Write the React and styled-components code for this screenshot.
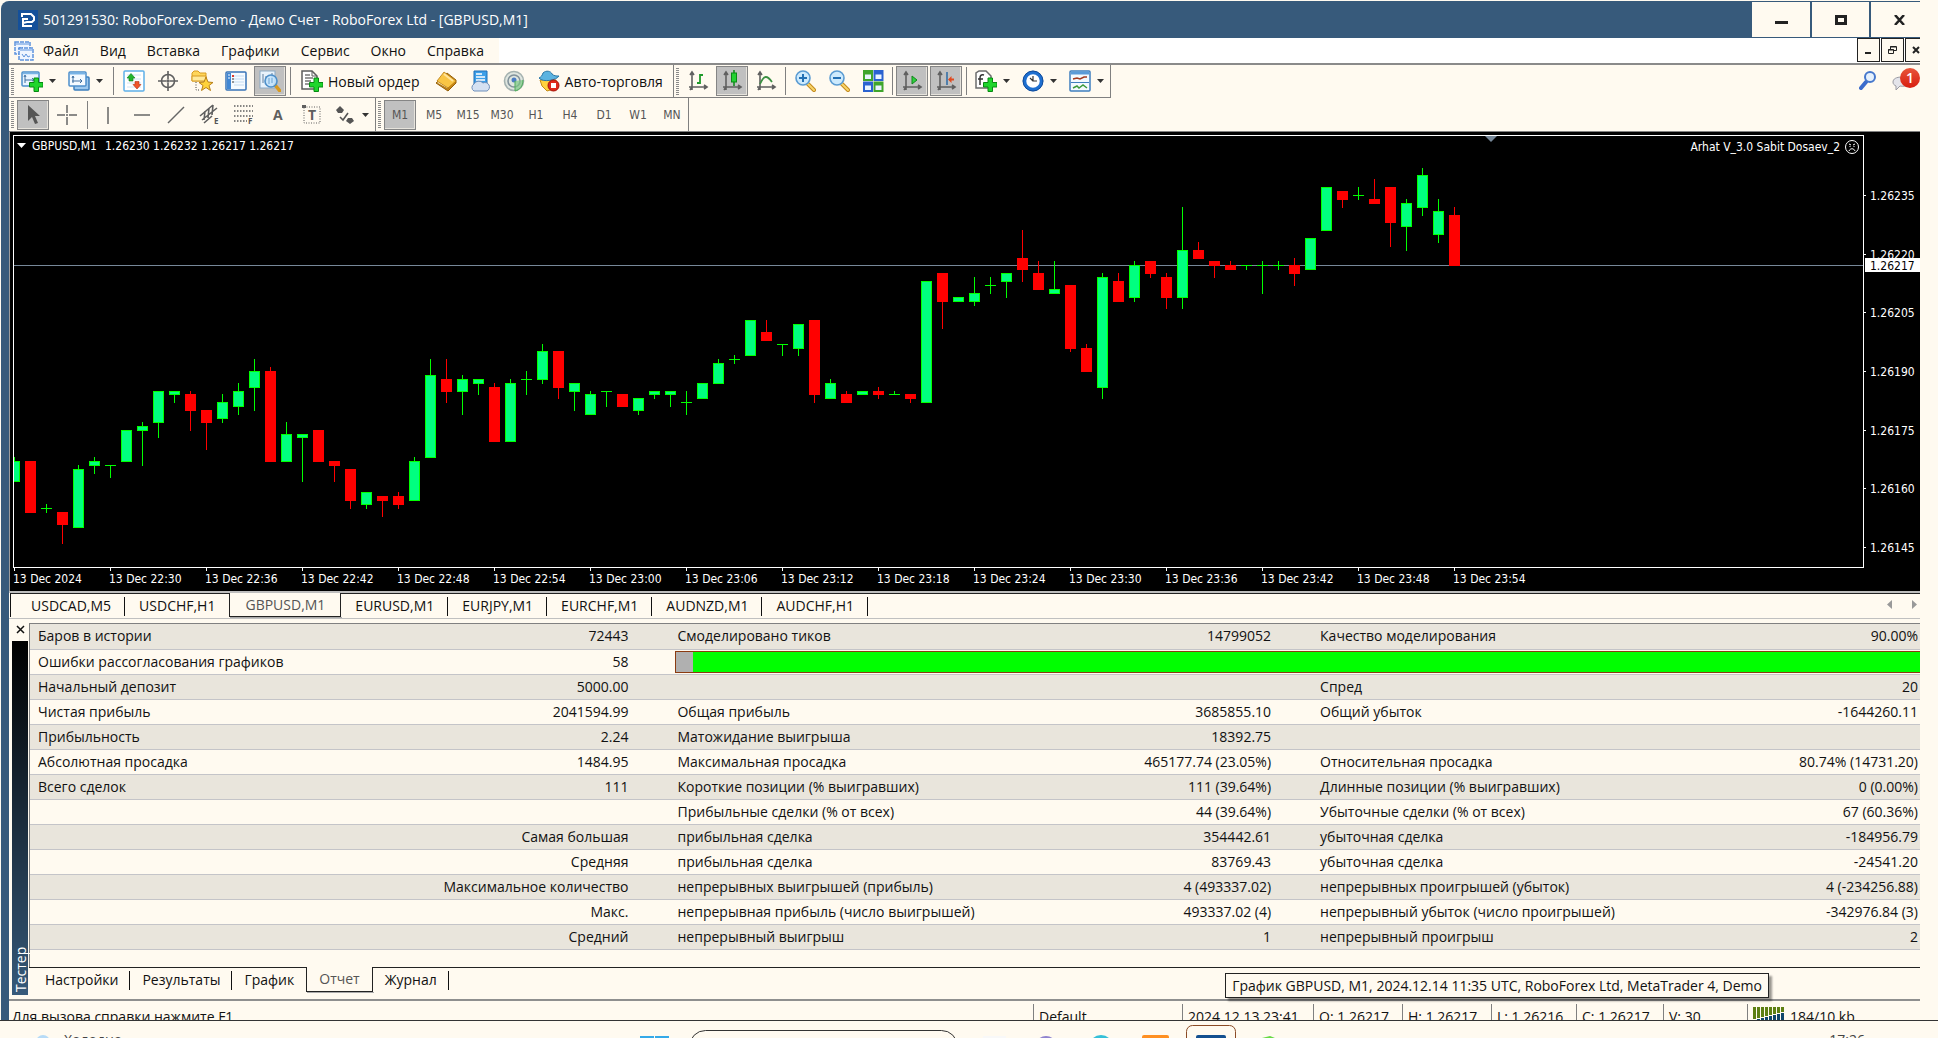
import React from 'react';
import styled, { createGlobalStyle } from 'styled-components'

const GlobalStyle = createGlobalStyle`
  * {
    box-sizing: border-box;
  }

  body {
    margin: 0;
    background: #fffaf0;
    color: #111111;
    font-family: "Open Sans", "Noto Sans", sans-serif;
    font-size: 14px;
  }

  button {
    margin: 0;
    padding: 0;
    border: 0;
    background: none;
    color: inherit;
    font: inherit;
    white-space: nowrap;
  }
`

const Desktop = styled.div`
  display: flex;
  flex-direction: column;
  height: 100vh;
  overflow: hidden;
`

const AppWindow = styled.div`
  display: flex;
  flex-direction: column;
  flex: 1;
  min-height: 0;
  margin: 1px 18px 0 1px;
  padding-left: 8px;
  background: #375a7b;
  border-top-left-radius: 8px;
`

const TitleBar = styled.header`
  display: flex;
  align-items: center;
  gap: 5px;
  height: 37px;
  padding-left: 9px;
  color: #ffffff;
`

const Title = styled.h1`
  flex: 1;
  margin: 0;
  font-size: 14px;
  font-weight: 400;
`

const WindowButtons = styled.div`
  display: flex;
  gap: 2px;
  height: 35px;
`

const WindowButton = styled.button`
  display: flex;
  align-items: center;
  justify-content: center;
  width: ${props => props.$width}px;
  padding-left: ${props => props.$cut ? 8 : 0}px;
  background: #fffaf0;
`

const MenuBar = styled.nav`
  display: flex;
  height: 25px;
  background: #ffffff;
`

const MenuItems = styled.div`
  display: flex;
  align-items: center;
  gap: 21px;
  width: 490px;
  padding-left: 5px;
  background: #fffaf0;

  svg {
    margin-right: -12px;
  }
`

const ChildButtons = styled.div`
  display: flex;
  gap: 1px;
  height: 24px;
  margin-left: auto;
`

const ChildButton = styled.button`
  display: flex;
  align-items: center;
  justify-content: center;
  width: ${props => props.$width}px;
  padding-left: ${props => props.$cut ? 6 : 0}px;
  border: 1px solid #222222;
  border-right-width: ${props => props.$cut ? 0 : 1}px;
  background: #fffaf0;
`

const Toolbars = styled.div`
  background: #fffaf0;
  border-top: 2px solid #8a8a8a;
  border-bottom: 1px solid #808080;
`

const ToolbarRow = styled.div`
  display: flex;
  height: 33px;
`

const Toolbar = styled.div`
  display: flex;
  align-items: center;
  gap: 2px;
  padding-right: ${props => props.$end}px;
  border-right: 1px solid #808080;
  border-bottom: ${props => props.$line ? 1 : 0}px solid #808080;
`

const Handle = styled.div`
  width: 3px;
  height: 27px;
  margin: 0 1px 0 2px;
  background: repeating-linear-gradient(#8a8a8a 0 1px, #fffaf0 1px 2px);
`

const Separator = styled.div`
  width: 1px;
  height: 28px;
  margin: 0 ${props => props.$tight ? 1 : 2}px;
  background: #808080;
`

const ToolButton = styled.button`
  display: flex;
  align-items: center;
  justify-content: center;
  gap: 5px;
  min-width: 32px;
  height: 30px;
  padding: ${props => props.$wide ? '0 7px 0 5px' : '0'};
  border: 1px solid ${props => props.$pressed ? '#858585' : 'transparent'};
  background: ${props => props.$pressed ? '#c0c0c0' : 'none'};
  box-shadow: ${props => props.$pressed ? 'inset -1px -1px #e6e3dc' : 'none'};
`

const DropButton = styled.button`
  display: flex;
  align-items: center;
  gap: 6px;
  width: 45px;
  height: 30px;
  padding-left: 4px;
`

const PeriodButton = styled(ToolButton)`
  color: #555555;
  font-family: "DejaVu Sans Condensed", "DejaVu Sans", sans-serif;
  font-size: 12px;
`

const Alerts = styled.div`
  display: flex;
  align-items: center;
  gap: 15px;
  margin-left: auto;
  padding-bottom: 2px;
`

const AlertButton = styled.button`
  position: relative;
  display: flex;
  width: ${props => props.$width}px;
  height: 22px;
`

const Badge = styled.span`
  position: absolute;
  top: -2px;
  right: 0;
  width: 20px;
  height: 20px;
  border-radius: 10px;
  background: linear-gradient(#e8553a, #d81e10);
  color: #ffffff;
  font-size: 14px;
  font-weight: 600;
  line-height: 20px;
  text-align: center;
`

const ChartPanel = styled.main`
  display: flex;
  height: 459px;
  background: #000000;
  border-left: 1px solid #9a9a9a;

  text {
    fill: #ffffff;
    font-family: "DejaVu Sans Condensed", "DejaVu Sans", sans-serif;
    font-size: 12px;
  }

  text.current {
    fill: #000000;
  }
`

const Plot = styled.svg`
  flex: 1;
  min-width: 0;
  height: 459px;
`

const PriceAxis = styled.svg`
  flex: 0 0 57px;
  height: 459px;
`

const ChartTabs = styled.div`
  display: flex;
  height: 28px;
  padding: 0 0 1px 1px;
  background: #fffaf0;
  border-top: 2px solid #bdbdbd;
  border-bottom: 1px solid #c0c0c0;
`

const TabList = styled.div`
  display: flex;
  flex: 1;
  padding-left: ${props => props.$indent}px;
  border-top: 1px solid #222222;
  border-left: ${props => props.$edge ? 1 : 0}px solid #111111;
`

const Tab = styled.button`
  position: relative;
  margin-top: ${props => props.$active ? -1 : 0}px;
  padding: 0 ${props => props.$side}px;
  color: ${props => props.$active ? '#555555' : '#111111'};
  background: #fffaf0;
  line-height: 22px;
  border: ${props => props.$active ? '1px solid #222222' : '0'};
  border-top: 0;
  box-shadow: ${props => props.$active ? '1px 1px #aaaaaa' : 'none'};

  &::after {
    content: "";
    position: absolute;
    top: 3px;
    right: 0;
    width: ${props => props.$line ? 1 : 0}px;
    height: 19px;
    background: #111111;
  }
`

const TabScroll = styled.div`
  display: flex;
  align-items: center;
  gap: 20px;
  padding: 0 3px 2px 0;
  border-top: 1px solid #222222;
`

const Tester = styled.section`
  display: flex;
  flex: 1;
  min-height: 0;
  padding: 4px 0 0 3px;
  background: #fffaf0;
`

const TesterSide = styled.div`
  display: flex;
  flex-direction: column;
  width: 17px;
  padding-right: 1px;
  margin-bottom: 4px;
`

const CloseButton = styled.button`
  display: flex;
  align-items: flex-start;
  justify-content: center;
  height: 18px;
  padding-top: 2px;
`

const TesterName = styled.div`
  flex: 1;
  padding: 3px 1px 3px 0;
  background: linear-gradient(#375a7b, #2f4d69 12%, #000000);
  color: #ffffff;
  line-height: 16px;
  writing-mode: vertical-rl;
  transform: rotate(180deg);
`

const TesterBody = styled.div`
  display: flex;
  flex-direction: column;
  flex: 1;
  min-width: 0;
`

const ReportFrame = styled.div`
  flex: 1;
  min-height: 0;
  border-top: 1px solid #808080;
  border-left: 1px solid #808080;
`

const Report = styled.table`
  width: 100%;
  table-layout: fixed;
  border-collapse: collapse;
`

const ReportRow = styled.tr`
  height: 25px;
  background: ${props => props.$odd ? '#e9e5dc' : '#fffaf0'};
  border-bottom: 1px solid #c4c4c8;
`

const Name = styled.td`
  padding: 0 0 0 ${props => props.$first ? 8 : 3}px;
  line-height: 24px;
  white-space: nowrap;
`

const Value = styled.td`
  padding: 0 ${props => props.$last ? 2 : 46}px 0 0;
  line-height: 24px;
  text-align: right;
  white-space: nowrap;
`

const ProgressCell = styled.td`
  padding: 0 0 0 1px;
`

const Quality = styled.div`
  height: 22px;
  background: linear-gradient(to right, #b0b0b0 17px, #00ff00 17px);
  border: 1px solid #8b3a10;
  border-right: 0;
`

const TesterTabs = styled.div`
  display: flex;
  height: 32px;
  padding-bottom: 7px;
`

const StatusBar = styled.footer`
  display: flex;
  height: 21px;
  overflow: hidden;
  background: #fffaf0;
  border-top: 2px solid #8f8f8f;
`

const StatusCell = styled.div`
  display: flex;
  align-items: center;
  gap: 6px;
  flex: ${props => props.$width ? `0 0 ${props.$width}px` : 1};
  height: 30px;
  margin-top: ${props => props.$width ? 3 : 0}px;
  padding-left: ${props => props.$width ? 5 : 3}px;
  padding-bottom: ${props => props.$width ? 6 : 0}px;
  border-left: ${props => props.$width ? 1 : 0}px solid #808080;
  white-space: nowrap;
`

const Tooltip = styled.div`
  position: absolute;
  right: 169px;
  bottom: 40px;
  padding: 0 6px;
  background: #fffaf0;
  border: 1px solid #222222;
  box-shadow: 3px 3px 2px rgba(0, 0, 0, 0.4);
  line-height: 23px;
  white-space: nowrap;
`

const Taskbar = styled.div`
  display: flex;
  flex: 0 0 18px;
  overflow: hidden;
  background: #fffaf0;
  border-top: 1px solid #333333;
`

const Weather = styled.div`
  display: flex;
  gap: 14px;
  flex: 0 0 640px;
  padding: 9px 0 0 36px;
  color: #444444;
`

const WeatherDot = styled.div`
  width: 14px;
  height: 14px;
  margin-top: 5px;
  border-radius: 7px;
  background: #b7dbf7;
`

const Clock = styled.time`
  margin-left: auto;
  padding: 9px 73px 0 0;
  color: #444444;
`

const candles = [
  // open, high, low, close (points above 1.26000)
  [162, 168, 162, 167], [167, 167, 154, 154], [155, 156, 154, 155], [154, 154, 146, 151],
  [150, 166, 150, 165], [166, 168, 164, 167], [166, 166, 163, 166], [167, 175, 167, 175],
  [175, 177, 166, 176], [177, 185, 173, 185], [184, 185, 182, 185], [184, 185, 175, 180],
  [180, 180, 170, 177], [178, 184, 177, 182], [181, 187, 179, 185], [186, 193, 180, 190],
  [190, 191, 167, 167], [167, 177, 167, 174], [173, 174, 162, 174], [175, 175, 167, 167],
  [167, 167, 162, 166], [165, 165, 155, 157], [156, 159, 155, 159], [158, 158, 153, 157],
  [158, 159, 155, 156], [157, 168, 157, 167], [168, 193, 168, 189], [188, 193, 182, 185],
  [185, 189, 179, 188], [187, 188, 184, 188], [186, 187, 172, 172], [172, 188, 172, 187],
  [188, 190, 184, 188], [188, 197, 187, 195], [195, 195, 183, 186], [185, 187, 180, 187],
  [179, 185, 179, 184], [185, 185, 181, 185], [184, 184, 181, 181], [180, 183, 179, 183],
  [184, 185, 183, 185], [184, 185, 181, 185], [182, 185, 179, 182], [183, 187, 183, 187],
  [187, 193, 187, 192], [193, 194, 192, 193], [194, 203, 194, 203], [200, 203, 198, 198],
  [197, 197, 194, 197], [196, 202, 194, 202], [203, 203, 182, 184], [183, 188, 183, 187],
  [184, 185, 182, 182], [184, 185, 184, 185], [185, 186, 183, 184], [184, 185, 184, 184],
  [184, 184, 182, 183], [182, 213, 182, 213], [215, 215, 201, 208], [208, 209, 208, 209],
  [208, 214, 207, 210], [212, 214, 210, 212], [213, 215, 209, 215], [219, 226, 213, 216],
  [215, 218, 211, 211], [210, 218, 210, 211], [212, 212, 195, 196], [196, 197, 190, 190],
  [186, 215, 183, 214], [213, 215, 208, 208], [209, 218, 208, 217], [218, 218, 214, 215],
  [214, 215, 206, 209], [209, 232, 206, 221], [221, 223, 219, 219], [218, 218, 214, 217],
  [217, 218, 216, 216], [217, 217, 216, 217], [217, 218, 210, 217], [217, 218, 216, 217],
  [217, 219, 212, 215], [216, 224, 216, 224], [226, 237, 226, 237], [236, 236, 232, 234],
  [235, 237, 234, 235], [234, 239, 233, 233], [237, 237, 222, 228], [227, 234, 221, 233],
  [232, 242, 230, 240], [225, 234, 223, 231], [230, 232, 217, 217],
]

const times = ['2024', '22:30', '22:36', '22:42', '22:48', '22:54', '23:00', '23:06', '23:12',
  '23:18', '23:24', '23:30', '23:36', '23:42', '23:48', '23:54']

const prices = [235, 220, 205, 190, 175, 160, 145]

const priceToY = (points) => Math.round(63 + (235 - points) * 3.911)

const report = [
  ['Баров в истории', '72443', 'Смоделировано тиков', '14799052', 'Качество моделирования', '90.00%'],
  ['Ошибки рассогласования графиков', '58'],
  ['Начальный депозит', '5000.00', '', '', 'Спред', '20'],
  ['Чистая прибыль', '2041594.99', 'Общая прибыль', '3685855.10', 'Общий убыток', '-1644260.11'],
  ['Прибыльность', '2.24', 'Матожидание выигрыша', '18392.75', '', ''],
  ['Абсолютная просадка', '1484.95', 'Максимальная просадка', '465177.74 (23.05%)', 'Относительная просадка', '80.74% (14731.20)'],
  ['Всего сделок', '111', 'Короткие позиции (% выигравших)', '111 (39.64%)', 'Длинные позиции (% выигравших)', '0 (0.00%)'],
  ['', '', 'Прибыльные сделки (% от всех)', '44 (39.64%)', 'Убыточные сделки (% от всех)', '67 (60.36%)'],
  ['', 'Самая большая', 'прибыльная сделка', '354442.61', 'убыточная сделка', '-184956.79'],
  ['', 'Средняя', 'прибыльная сделка', '83769.43', 'убыточная сделка', '-24541.20'],
  ['', 'Максимальное количество', 'непрерывных выигрышей (прибыль)', '4 (493337.02)', 'непрерывных проигрышей (убыток)', '4 (-234256.88)'],
  ['', 'Макс.', 'непрерывная прибыль (число выигрышей)', '493337.02 (4)', 'непрерывный убыток (число проигрышей)', '-342976.84 (3)'],
  ['', 'Средний', 'непрерывный выигрыш', '1', 'непрерывный проигрыш', '2'],
]

const menus = ['Файл', 'Вид', 'Вставка', 'Графики', 'Сервис', 'Окно', 'Справка']
const periods = ['M1', 'M5', 'M15', 'M30', 'H1', 'H4', 'D1', 'W1', 'MN']
const chartTabs = ['USDCAD,M5', 'USDCHF,H1', 'GBPUSD,M1', 'EURUSD,M1', 'EURJPY,M1', 'EURCHF,M1', 'AUDNZD,M1', 'AUDCHF,H1']
const testerTabs = ['Настройки', 'Результаты', 'График', 'Отчет', 'Журнал']

const status = [
  ['Default', 149], ['2024.12.13 23:41', 131], ['O: 1.26217', 89], ['H: 1.26217', 89],
  ['L: 1.26216', 85], ['C: 1.26217', 87], ['V: 30', 84],
]

const plus = <path d="M13 8h4.500v4.500H22V17h-4.500v4.500H13V17H8.500v-4.500H13z" fill="#1fd62c" stroke="#078a12" />
const axes = <path d="M5 3v17M2 17h17M3 5l2-3 2 3M17 15l3 2-3 2M3 20l2-3" fill="none" stroke="#5f5f5f" strokeWidth="1.6" />

const icons = {
  newChart: <>
    <rect x="1" y="2" width="17" height="14" rx="1" fill="#e9f4ff" stroke="#4c8fcc" strokeWidth="1.5" />
    <path d="M2 3.500h15" stroke="#79b4e6" strokeWidth="1.500" />
    <path d="M4 6v7M3 7l1-2 1 2M4 10h9M11 8l2 2-2 1" fill="none" stroke="#3f6fa0" />
    {plus}
  </>,
  profiles: <>
    <rect x="6" y="7" width="15" height="13" rx="1" fill="#9cc8ee" stroke="#3c7fbd" strokeWidth="1.5" />
    <rect x="1" y="2" width="17" height="14" rx="1" fill="#f4faff" stroke="#4c8fcc" strokeWidth="1.5" />
    <path d="M2 3.500h15" stroke="#79b4e6" strokeWidth="2" />
    <path d="M5 6v7M4 11h10M12 9l2 2-2 2M4 8l1-2 1 2" fill="none" stroke="#3f6fa0" />
  </>,
  market: <>
    <rect x="1" y="1" width="20" height="20" rx="1" fill="#ffffff" stroke="#5fb0e8" strokeWidth="1.5" />
    <path d="M4 5h14M4 9h14M4 13h14M4 17h14" stroke="#cfe3f2" />
    <path d="M8 3.500l4 4.500h-2v3H6V8H4z" fill="#22b52c" stroke="#0d7d16" strokeWidth=".6" />
    <path d="M14 19l-4-4.500h2v-3h4v3h2z" fill="#f0562a" stroke="#b53010" strokeWidth=".6" />
  </>,
  crosshair: <g fill="none" stroke="#606060" strokeWidth="1.6">
    <circle cx="11" cy="11" r="6.500" />
    <path d="M11 1v8M11 13v8M1 11h8M13 11h8" />
    <circle cx="11" cy="11" r="1" />
  </g>,
  navigator: <>
    <path d="M1 3l2-2h4l2 2h6v8H1z" fill="#ffd65a" stroke="#d79b21" />
    <path d="M1 6h14v5H1z" fill="#ffe99a" stroke="#d79b21" />
    <path d="M5 12v8h4" fill="none" stroke="#444444" strokeDasharray="1 1.5" />
    <path d="M15 7l2 5 5 .5-4 3 1.500 5-4.500-3-4.500 3 1.500-5-4-3 5-.5z" fill="#ffd23a" stroke="#b8801a" />
  </>,
  terminal: <>
    <rect x="1" y="2" width="20" height="18" rx="1" fill="#f6fbff" stroke="#3874b8" strokeWidth="1.5" />
    <path d="M2 3h4v16H2z" fill="#4187d4" />
    <path d="M9 6h10M9 9h10M9 12h10M9 15h10" stroke="#c3dbf2" />
    <path d="M3 5h2M3 8h2" stroke="#ffffff" />
    <path d="M7 6h2" stroke="#e03a2a" strokeWidth="2" />
    <path d="M7 9h2M7 12h2" stroke="#333333" />
  </>,
  tester: <>
    <rect x="1" y="1" width="15" height="17" fill="#e8f2fb" stroke="#8ba9c4" />
    <path d="M4 4v9M7 6v5M13 3v5" stroke="#5f7f9f" />
    <path d="M16 15l5 6" stroke="#d89a20" strokeWidth="3.500" strokeLinecap="round" />
    <circle cx="12" cy="11" r="6" fill="#bfe2fb" fillOpacity=".85" stroke="#4d8fc9" strokeWidth="1.6" />
    <path d="M10 8v6M13 8v5" stroke="#6aa3d2" />
  </>,
  order: <>
    <path d="M1 1h10l5 5v13H1z" fill="#ffffff" stroke="#5c5c5c" strokeWidth="1.5" />
    <path d="M11 1v5h5" fill="none" stroke="#5c5c5c" />
    <path d="M4 5h5M4 8h8M4 11h6M4 14h4" stroke="#777777" strokeWidth="1.500" />
    {plus}
  </>,
  editor: <>
    <path d="M1 13l12 8 8-8v-3l-9-7z" fill="#c98714" stroke="#94600a" />
    <path d="M2 13l11 6v-3L3 10z" fill="#fff2c8" stroke="#a66c0c" strokeWidth=".8" />
    <path d="M9 2l12 9-8 7-11-7z" fill="#f9c545" stroke="#b87c14" strokeWidth=".8" />
    <path d="M9 4l9 7" stroke="#ffe39a" strokeWidth="2" />
  </>,
  cloud: <>
    <path d="M5 1h13v14H5z" fill="#3c9fe8" stroke="#1e6eb8" />
    <path d="M7 4h6M7 7h9M7 10h9" stroke="#ffffff" strokeWidth="1.5" />
    <path d="M5 21a4 4 0 0 1 0-7 5 4 0 0 1 9-1 4 4 0 0 1 4 8z" fill="#d5e1f2" stroke="#6f8fbb" />
  </>,
  signals: <>
    <circle cx="11" cy="11" r="9.500" fill="#dfe6e0" stroke="#a5b2b0" strokeWidth="1.6" />
    <circle cx="11" cy="11" r="6" fill="none" stroke="#82929b" strokeWidth="1.6" />
    <circle cx="11" cy="10" r="2.500" fill="#4c7dc4" />
    <path d="M12 11v10c5-1 8-5 8-11" fill="#7cc884" fillOpacity=".7" stroke="#4fae5a" />
  </>,
  autoTrade: <>
    <path d="M2 10h16l-2 9-7 2-5-5z" fill="#ffd23e" stroke="#c48a16" />
    <path d="M1 8c2-1 3-2 4-5 3-3 8-2 9 1 2 2 4 2 7 2-2 4-16 7-20 2z" fill="#5cb3e0" stroke="#2876a6" />
    <circle cx="15.500" cy="15.500" r="5.500" fill="#e02a1c" stroke="#a51208" />
    <rect x="13" y="13" width="5" height="5" fill="#ffffff" />
  </>,
  bars: <>{axes}<path d="M13 14V4M13 5h3M10 13h3" stroke="#1f9a2b" strokeWidth="1.800" /></>,
  candle: <>{axes}<path d="M13 0v16" stroke="#0b8a17" strokeWidth="1.5" /><rect x="10.500" y="3" width="5" height="9" fill="#23d233" stroke="#0b8a17" /></>,
  line: <>{axes}<path d="M5 14c4-9 7-9 12-2" fill="none" stroke="#3b8f42" strokeWidth="1.800" /></>,
  shift: <>{axes}<path d="M11 6v8l5-4z" fill="#2fd13e" stroke="#12861d" /></>,
  offset: <>{axes}<path d="M12 2v13" stroke="#2d6aa5" strokeWidth="1.5" /><path d="M19 8.500h-2.500V6L13 9.500l3.500 3.500v-2.500H19z" fill="#e04a20" /></>,
  tiles: <>
    <rect x="1" y="0" width="10" height="11" fill="#3fa52c" />
    <rect x="11.500" y="0" width="10" height="11" fill="#2a62d0" />
    <rect x="1" y="11.500" width="10" height="10.500" fill="#2a62d0" />
    <rect x="11.500" y="11.500" width="10" height="10.500" fill="#3fa52c" />
    <path d="M3 4.500h6V9H3zM13.500 4.500h6V9h-6zM3 15.500h6V20H3zM13.500 15.500h6V20h-6z" fill="#e9f4ff" />
  </>,
  indicators: <>
    <path d="M4 1h7l5 5v12H1V3z" fill="#ffffff" stroke="#6c6c6c" strokeWidth="1.500" />
    <path d="M9 5c-3-1-4 1-4 3v7M3 9h5" fill="none" stroke="#333333" strokeWidth="1.500" />
    {plus}
  </>,
  clock: <>
    <circle cx="11" cy="11" r="8.500" fill="#ffffff" stroke="#1e6fd0" strokeWidth="3.500" />
    <circle cx="11" cy="11" r="10" fill="none" stroke="#124c9a" />
    <path d="M11 6v5h4M8 8l3 3" fill="none" stroke="#333333" strokeWidth="1.200" />
  </>,
  template: <>
    <rect x="1" y="1" width="20" height="20" rx="1" fill="#f4faff" stroke="#3f7fbe" strokeWidth="1.500" />
    <path d="M2 3h18" stroke="#5b9bd8" strokeWidth="3" />
    <path d="M2 12.500h18" stroke="#3f7fbe" />
    <path d="M4 9l4-1 3 1 4-2 3 0" fill="none" stroke="#a33a20" strokeWidth="1.500" />
    <path d="M4 18l4-2 2 2 4-3 4 3" fill="none" stroke="#3c9a3c" strokeWidth="1.500" />
  </>,
  cursor: <path d="M6 1v16l4-4 3 7 3-1-3-7h5z" fill="#555555" />,
  cross: <path d="M11 1v8M11 13v8M1 11h8M13 11h8M10 11h2" stroke="#666666" strokeWidth="1.500" />,
  vline: <path d="M11 3v17" stroke="#666666" strokeWidth="1.500" />,
  hline: <path d="M3 11h16" stroke="#666666" strokeWidth="1.500" />,
  trend: <path d="M3 19L19 3" stroke="#666666" strokeWidth="1.500" />,
  channel: <>
    <path d="M1 12L14 1M3 16L18 4M5 19l8-7M6 7l-1 9M10 4l-1 10M14 1l-1 10" stroke="#5f5f5f" strokeWidth="1.600" />
    <text x="15" y="20" fontSize="8" fontWeight="700" fill="#555555">E</text>
  </>,
  fibo: <>
    <path d="M1 2h19M1 7h19M1 12h19M1 17h13" stroke="#5f5f5f" strokeWidth="1.400" strokeDasharray="1.500 1.500" />
    <text x="15" y="20" fontSize="8" fontWeight="700" fill="#555555">F</text>
  </>,
  letter: <text x="6" y="16" fontSize="14" fontWeight="700" fill="#5f5f5f">A</text>,
  label: <>
    <rect x="3" y="3" width="16" height="16" fill="none" stroke="#5f5f5f" strokeDasharray="1 1.500" />
    <path d="M1 1h4v3H1z" fill="#5f5f5f" />
    <text x="7" y="16" fontSize="14" fontWeight="700" fill="#5f5f5f">T</text>
  </>,
  arrows: <>
    <path d="M6 2l4 4-2 3H4L2 6zM16 20l-4-3 2-3h4l2 3z" fill="#555555" />
    <path d="M6 13l3 3 5-7" fill="none" stroke="#555555" strokeWidth="1.600" />
  </>,
}

const Icon = ({ name }) => (
  <svg width="22" height="22" viewBox="0 0 22 22" aria-hidden="true">{icons[name]}</svg>
)

const Zoom = ({ minus }) => (
  <svg width="22" height="22" viewBox="0 0 22 22" aria-hidden="true">
    <path d="M14 14l6 6" stroke="#c48a1c" strokeWidth="4" strokeLinecap="round" />
    <path d="M14 14l6 6" stroke="#f8d56a" strokeWidth="2" strokeLinecap="round" />
    <circle cx="9" cy="8" r="7" fill="#cdeafd" stroke="#5a9bd2" strokeWidth="1.600" />
    <path d={minus ? 'M5 8h8' : 'M5 8h8M9 4v8'} stroke="#2370b4" strokeWidth="2" />
  </svg>
)

const Arrow = () => (
  <svg width="7" height="4" viewBox="0 0 7 4" aria-hidden="true"><path d="M0 0h7L3.500 4z" fill="#333333" /></svg>
)

const Tool = ({ name, label, pressed }) => (
  <ToolButton aria-label={label} $pressed={pressed}><Icon name={name} /></ToolButton>
)

const Drop = ({ name, label }) => (
  <DropButton aria-label={label}><Icon name={name} /><Arrow /></DropButton>
)

const Candle = ({ index, data }) => {
  const [open, high, low, close] = data
  const x = 4 + index * 16
  const top = priceToY(Math.max(open, close))
  const bottom = priceToY(Math.min(open, close))
  const up = close >= open
  const color = up ? '#00ff00' : '#ff0000'

  return <g>
    <rect x={x} y={priceToY(high)} width="1" height={priceToY(low) - priceToY(high) + 1} fill={color} />
    <rect x={x - 5} y={top} width="11" height={bottom - top + 1} fill={color} />
    {up && bottom - top > 1 &&
      <rect x={x - 4} y={top + 1} width="9" height={bottom - top - 1} fill="#00ff7f" />
    }
  </g>
}

class App extends React.Component {
  state = {
    period: 'M1',
    chart: 'GBPUSD,M1',
    testerTab: 'Отчет',
  }

  renderChart() {
    return (
      <ChartPanel>
        <Plot role="img" aria-label="GBPUSD,M1">
          <rect x="4" y="133" width="100%" height="1" fill="#778899" />
          {candles.map((data, index) => <Candle key={index} index={index} data={data} />)}
          {/* hides the half of the first candle that is left of the frame */}
          <rect x="-2" y="0" width="5" height="459" fill="#000000" />
          <g fill="#ffffff">
            <rect x="3" y="3" width="100%" height="1" />
            <rect x="3" y="3" width="1" height="433" />
            <rect x="3" y="435" width="100%" height="1" />
          </g>
          <path d="M1475 4h12l-6 6z" fill="#778899" />
          <path d="M7 11h9l-4.500 5z" fill="#ffffff" />
          <text x="22" y="18">GBPUSD,M1</text>
          <text x="95" y="18">1.26230 1.26232 1.26217 1.26217</text>
          <text x="100%" y="19" dx="-23" textAnchor="end">Arhat V_3.0 Sabit Dosaev_2</text>
          <svg x="100%" y="0" overflow="visible">
            <g fill="none" stroke="#ffffff">
              <circle cx="-11" cy="15" r="6.500" />
              <path d="M-14 19c1-3 5-3 6 0M-14 12l2 1M-8 12l-2 1M-13 14v1M-9 14v1" />
            </g>
          </svg>
          {times.map((time, index) => (
            <g key={time}>
              <rect x={4 + index * 96} y="436" width="1" height="3" fill="#ffffff" />
              <text x={3 + index * 96} y="451">13 Dec {time}</text>
            </g>
          ))}
        </Plot>
        <PriceAxis aria-hidden="true">
          <rect x="0" y="3" width="1" height="433" fill="#ffffff" />
          {prices.map((price) => (
            <g key={price}>
              <rect x="1" y={priceToY(price)} width="2" height="1" fill="#ffffff" />
              <text x="7" y={priceToY(price) + 5}>1.26{price}</text>
            </g>
          ))}
          <rect x="2" y="126" width="55" height="14" fill="#ffffff" />
          <text className="current" x="7" y="138">1.26217</text>
        </PriceAxis>
      </ChartPanel>
    )
  }

  renderToolbars() {
    return (
      <Toolbars>
        <ToolbarRow>
          <Toolbar $end={2} $line>
            <Handle />
            <Drop name="newChart" label="Новый график" />
            <Drop name="profiles" label="Профили" />
            <Separator />
            <Tool name="market" label="Обзор рынка" />
            <Tool name="crosshair" label="Окно данных" />
            <Tool name="navigator" label="Навигатор" />
            <Tool name="terminal" label="Терминал" />
            <Tool name="tester" label="Тестер стратегий" pressed />
            <Separator />
            <ToolButton $wide><Icon name="order" />Новый ордер</ToolButton>
            <Tool name="editor" label="MetaEditor" />
            <Tool name="cloud" label="Хостинг" />
            <Tool name="signals" label="Сигналы" />
            <ToolButton $wide><Icon name="autoTrade" />Авто-торговля</ToolButton>
          </Toolbar>
          <Toolbar $end={0} $line>
            <Handle />
            <Tool name="bars" label="Бары" />
            <Tool name="candle" label="Свечи" pressed />
            <Tool name="line" label="Линия" />
            <Separator $tight />
            <ToolButton aria-label="Увеличить"><Zoom /></ToolButton>
            <ToolButton aria-label="Уменьшить"><Zoom minus /></ToolButton>
            <Tool name="tiles" label="Упорядочить окна" />
            <Separator $tight />
            <Tool name="shift" label="Автопрокрутка" pressed />
            <Tool name="offset" label="Сдвиг графика" pressed />
            <Separator />
            <Drop name="indicators" label="Индикаторы" />
            <Drop name="clock" label="Периоды" />
            <Drop name="template" label="Шаблоны" />
          </Toolbar>
          <Alerts>
            <AlertButton $width={18} aria-label="Поиск">
              <svg width="18" height="22" viewBox="0 0 18 22">
                <path d="M7 12l-5 6" stroke="#3c6ccc" strokeWidth="4" strokeLinecap="round" />
                <circle cx="11" cy="7" r="5" fill="#e6f1fd" stroke="#4677cc" strokeWidth="2" />
              </svg>
            </AlertButton>
            <AlertButton $width={28} aria-label="Сообщения">
              <svg width="20" height="22" viewBox="0 0 20 22">
                <path d="M10 7c-6 0-9 2-9 5 0 2 1 3 3 4l0 4 4-4c6 1 10-1 10-5z" fill="#e4e4ea" stroke="#9a9aa2" />
              </svg>
              <Badge>1</Badge>
            </AlertButton>
          </Alerts>
        </ToolbarRow>
        <ToolbarRow>
          <Toolbar $end={0}>
            <Handle />
            <Tool name="cursor" label="Курсор" pressed />
            <Tool name="cross" label="Перекрестие" />
            <Separator />
            <Tool name="vline" label="Вертикальная линия" />
            <Tool name="hline" label="Горизонтальная линия" />
            <Tool name="trend" label="Трендовая линия" />
            <Tool name="channel" label="Канал" />
            <Tool name="fibo" label="Фибоначчи" />
            <Tool name="letter" label="Текст" />
            <Tool name="label" label="Метка" />
            <Drop name="arrows" label="Стрелки" />
          </Toolbar>
          <Toolbar $end={0}>
            <Handle />
            {periods.map((period) => (
              <PeriodButton
                key={period}
                $pressed={period === this.state.period}
                onClick={() => this.setState({ period })}
              >
                {period}
              </PeriodButton>
            ))}
          </Toolbar>
        </ToolbarRow>
      </Toolbars>
    )
  }

  renderTester() {
    return (
      <Tester>
        <TesterSide>
          <CloseButton aria-label="Закрыть">
            <svg width="9" height="9" viewBox="0 0 9 9"><path d="M1 1l7 7M8 1L1 8" stroke="#111111" strokeWidth="1.500" /></svg>
          </CloseButton>
          <TesterName>Тестер</TesterName>
        </TesterSide>
        <TesterBody>
          <ReportFrame>
            <Report>
              <colgroup>
                <col width="17%" />
                <col width="17.1%" />
                <col width="17%" />
                <col width="17%" />
                <col />
                <col width="12%" />
              </colgroup>
              <tbody>
                {report.map((row, index) => (
                  <ReportRow key={index} $odd={index % 2 === 0}>
                    <Name $first>{row[0]}</Name>
                    <Value>{row[1]}</Value>
                    {row.length === 2
                      ? <ProgressCell colSpan={4}><Quality /></ProgressCell>
                      : <>
                        <Name>{row[2]}</Name>
                        <Value>{row[3]}</Value>
                        <Name>{row[4]}</Name>
                        <Value $last>{row[5]}</Value>
                      </>
                    }
                  </ReportRow>
                ))}
              </tbody>
            </Report>
          </ReportFrame>
          <TesterTabs>
            <TabList $indent={4} role="tablist">
              {testerTabs.map((tab, index) => (
                <Tab
                  key={tab}
                  role="tab"
                  $side={12}
                  $active={tab === this.state.testerTab}
                  $line={tab !== this.state.testerTab && testerTabs[index + 1] !== this.state.testerTab}
                  onClick={() => this.setState({ testerTab: tab })}
                >
                  {tab}
                </Tab>
              ))}
            </TabList>
          </TesterTabs>
        </TesterBody>
      </Tester>
    )
  }

  render() {
    return (
      <Desktop>
        <GlobalStyle />
        <AppWindow>
          <TitleBar>
            <svg width="20" height="20" viewBox="0 0 20 20" aria-hidden="true">
              <rect width="20" height="20" fill="#14509a" />
              <path d="M4 7V4h9l3 3v3l-2 2H9l-4 1v3h9M5 13V9h5" fill="none" stroke="#ffffff" strokeWidth="2" />
            </svg>
            <Title>501291530: RoboForex-Demo - Демо Счет - RoboForex Ltd - [GBPUSD,M1]</Title>
            <WindowButtons>
              <WindowButton $width={58} aria-label="Свернуть">
                <svg width="13" height="13"><rect y="8" width="13" height="3" fill="#222222" /></svg>
              </WindowButton>
              <WindowButton $width={57} aria-label="Развернуть">
                <svg width="12" height="10"><rect x="1.500" y="1.500" width="9" height="7" fill="none" stroke="#222222" strokeWidth="3" /></svg>
              </WindowButton>
              <WindowButton $width={49} $cut aria-label="Закрыть">
                <svg width="11" height="10" viewBox="0 0 11 10"><path d="M1 0l9 10M10 0L1 10" stroke="#222222" strokeWidth="2.500" /></svg>
              </WindowButton>
            </WindowButtons>
          </TitleBar>

          <MenuBar>
            <MenuItems>
              <svg width="20" height="20" viewBox="0 0 20 20" aria-hidden="true">
                <rect x="1" y="1" width="15" height="12" fill="#eef5ff" stroke="#5d93dd" strokeDasharray="4 1" strokeWidth="1.500" />
                <path d="M2 3h13M4 8l2-2 1 2 2-2" fill="none" stroke="#5d93dd" />
                <rect x="5" y="7" width="14" height="12" fill="#eef5ff" stroke="#5d93dd" strokeDasharray="4 1" strokeWidth="1.500" />
                <path d="M6 9h12M8 13l2 3 2-3 2 3 2-1" fill="none" stroke="#5d93dd" />
              </svg>
              {menus.map((menu) => <button key={menu}>{menu}</button>)}
            </MenuItems>
            <ChildButtons>
              <ChildButton $width={23} aria-label="Свернуть окно">
                <svg width="7" height="9"><rect y="6" width="6" height="2" fill="#222222" /></svg>
              </ChildButton>
              <ChildButton $width={23} aria-label="Восстановить окно">
                <svg width="9" height="9" viewBox="0 0 9 9"><path d="M2.500 3V.5h6v4H6M.5 3.500h5v4h-5zM2 1h6M0 4h6" fill="none" stroke="#222222" /></svg>
              </ChildButton>
              <ChildButton $width={15} $cut aria-label="Закрыть окно">
                <svg width="8" height="8" viewBox="0 0 8 8"><path d="M1 1l6 6M7 1L1 7" stroke="#222222" strokeWidth="2" /></svg>
              </ChildButton>
            </ChildButtons>
          </MenuBar>

          {this.renderToolbars()}
          {this.renderChart()}

          <ChartTabs>
            <TabList $indent={6} $edge role="tablist">
              {chartTabs.map((tab, index) => (
                <Tab
                  key={tab}
                  role="tab"
                  $side={tab === this.state.chart ? 15 : 14}
                  $active={tab === this.state.chart}
                  $line={tab !== this.state.chart && chartTabs[index + 1] !== this.state.chart}
                  onClick={() => this.setState({ chart: tab })}
                >
                  {tab}
                </Tab>
              ))}
            </TabList>
            <TabScroll>
              <svg width="5" height="9"><path d="M5 0v9L0 4.500z" fill="#999999" /></svg>
              <svg width="5" height="9"><path d="M0 0v9l5-4.500z" fill="#999999" /></svg>
            </TabScroll>
          </ChartTabs>

          {this.renderTester()}

          <StatusBar>
            <StatusCell>Для вызова справки нажмите F1</StatusCell>
            {status.map(([text, width]) => <StatusCell key={text} $width={width}>{text}</StatusCell>)}
            <StatusCell $width={173}>
              <svg width="31" height="20" viewBox="0 0 31 20" aria-hidden="true">
                {[0, 1, 2, 3, 4, 5, 6, 7].map((bar) => (
                  <g key={bar}>
                    <rect x={bar * 4} y="1" width="3" height={12 - bar} fill="#5d7f12" />
                    <rect x={bar * 4} y={14 - bar} width="3" height={6 + bar} fill="#10466b" />
                  </g>
                ))}
              </svg>
              184/10 kb
            </StatusCell>
          </StatusBar>
        </AppWindow>

        <Taskbar>
          <Weather><WeatherDot />Холодно</Weather>
          <svg width="660" height="17" viewBox="640 0 660 17" aria-hidden="true">
            <path d="M640 15h14v2h-14zM655 15h14v2h-14z" fill="#35a9e8" />
            <rect x="689.500" y="9.500" width="268" height="32" rx="16" fill="none" stroke="#333333" />
            <rect x="983" y="15" width="23" height="4" fill="#f8f8f8" />
            <circle cx="1046" cy="26" r="11" fill="#8f83cf" />
            <circle cx="1101" cy="26" r="12" fill="#35c0d8" />
            <rect x="1142" y="14" width="27" height="20" rx="2" fill="#ff9022" />
            <rect x="1186.500" y="4.500" width="49" height="40" rx="6" fill="none" stroke="#8b4a25" />
            <rect x="1196" y="14" width="30" height="20" rx="2" fill="#14508f" />
            <path d="M1262 17l8-2 5 2z" fill="#66d943" />
          </svg>
          <Clock>17:26</Clock>
        </Taskbar>
        <Tooltip role="tooltip">График GBPUSD, M1, 2024.12.14 11:35 UTC, RoboForex Ltd, MetaTrader 4, Demo</Tooltip>
      </Desktop>
    );
  }
}

export default App;
